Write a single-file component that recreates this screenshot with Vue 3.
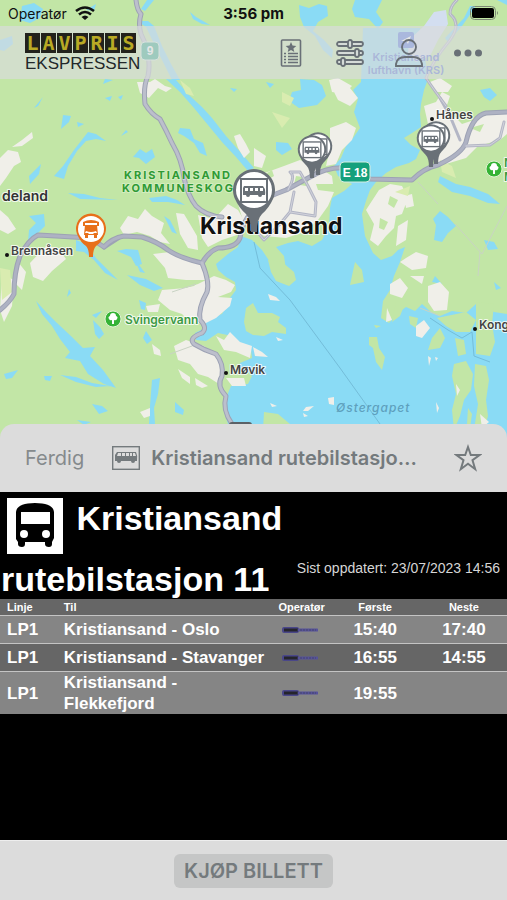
<template>
  <div class="screen">
    <section class="map-area">
      <svg class="map" viewBox="0 0 507 440" preserveAspectRatio="xMidYMin slice" role="img" aria-label="Kart">
        <rect class="land" width="507" height="440" />

        <!-- fjord -->
        <path class="water" d="M363 28 L420 28 L424 50 L428 79 L424 90 L421 104 L420 114 L421 127 L412 133 L404 138 L411 145 L420 150 L416 159 L409 163 L396 167 L386 173 L376 182 L370 190 L366 201 L362 214 L365 236 L373 253 L381 260 L392 256 L398 250 L405 247 L400 262 L394 276 L390 290 L383 301 L381 318 L389 323 L398 313 L406 307 L415 311 L422 304 L431 312 L440 316 L452 311 L466 313 L476 304 L486 307 L494 312 L507 314 L507 440 L232 440 L228 424 L224 412 L226 398 L231 386 L248 384 L252 376 L247 371 L238 372 L240 363 L252 358 L251 350 L240 345 L232 336 L218 333 L206 341 L196 340 L195 333 L205 328 L206 318 L222 314 L230 298 L236 290 L235 282 L226 277 L218 270 L216 264 L228 254 L238 247 L241 236 L252 240 L262 250 L270 262 L286 270 L284 256 L276 247 L288 243 L298 241 L312 246 L322 240 L329 226 L330 208 L332 198 L344 191 L352 184 L338 176 L334 166 L341 158 L346 146 L353 138 L360 128 L354 112 L358 99 L353 90 L361 82 Z" />
        <path class="water" d="M299 5 L309 8 L319 4 L327 6 L328 16 L318 22 L313 31 L324 40 L333 50 L332 58 L323 50 L315 36 L304 27 L300 17 Z M355 0 L382 0 L376 12 L383 22 L378 29 L369 19 L355 17 L352 9 Z M300 79 L314 80 L322 85 L326 96 L317 105 L299 108 L289 101 L292 92 L301 90 Z" />
        <path class="water" d="M166 79 L176 80 L190 96 L202 107 L212 118 L226 136 L242 154 L254 168 L248 171 L236 157 L222 142 L208 125 L194 108 L180 92 Z M137 21 L148 21 L154 26 L162 46 L171 64 L180 80 L172 80 L160 56 L146 27 Z M147 0 L154 0 L145 11 L141 9 Z" />

        <!-- inland lakes -->
        <path class="water" d="M22 6 L34 3 L43 9 L40 18 L30 23 L20 20 Z M0 40 L12 36 L13 44 L4 51 L0 50 Z M190 12 L196 17 L210 25 L202 24 L193 19 Z M86 10 L96 4 L94 11 Z M105 79 L113 80 L103 84 Z M105 98 L112 96 L110 101 Z M43 97 L38 106 L34 108 Z M118 97 L123 95 L121 100 Z M230 88 L237 89 L234 92 Z" />
        <path class="water" d="M63 115 L71 116 L69 122 L61 129 Z M77 122 L84 124 L78 127 Z M88 132 L96 134 L106 141 L96 139 L86 141 L77 151 L68 166 L64 179 L54 176 L63 166 L74 150 Z M41 164 L39 174 L30 184 L29 176 Z M133 157 L140 149 L146 153 L152 149 L155 157 L146 164 L139 158 Z M126 130 L121 136 L128 132 Z" />
        <path class="water" d="M180 128 L190 129 L194 139 L203 143 L207 156 L200 153 L194 143 L184 136 L178 133 Z M68 193 L84 194 L100 198 L118 200 L80 199 Z M149 198 L166 196 L177 200 L185 205 L168 202 L152 202 Z M29 216 L44 214 L45 226 L37 234 L28 242 L29 230 L36 223 Z M164 216 L170 220 L177 234 L172 232 Z M126 249 L138 250 L142 264 L136 266 L131 257 L117 251 Z" />
        <path class="water" d="M76 240 L86 244 L96 258 L108 270 L118 280 L105 273 L94 260 L84 252 L76 251 Z M127 275 L146 279 L163 288 L154 291 L140 285 Z M134 258 L145 273 L140 272 Z M36 301 L46 312 L57 323 L72 337 L83 348 L95 347 L90 356 L103 370 L116 388 L104 384 L88 374 L80 361 L65 358 L70 352 L60 339 L52 326 L42 314 Z M60 375 L76 377 L92 383 L110 386 L96 387 L76 382 Z" />
        <path class="water" d="M4 374 L18 370 L12 378 L6 379 Z M44 376 L52 376 L50 381 L45 380 Z M92 404 L102 406 L108 411 L99 414 Z M93 320 L100 327 L104 334 L99 339 L95 334 Z M92 315 L102 311 L96 318 Z M139 300 L146 303 L145 310 L141 309 Z M146 331 L152 340 L147 344 L143 338 Z M152 380 L160 378 L158 394 L154 408 L155 424 L149 424 L150 406 Z M175 402 L184 410 L183 415 L175 412 Z M69 289 L67 297 L71 293 Z M77 420 L91 422 L84 425 Z" />
        <path class="water" d="M276 142 L288 143 L292 149 L282 155 L276 150 Z M266 82 L274 84 L270 88 Z M480 90 L490 88 L497 95 L490 101 L484 97 Z M440 176 L456 184 L470 187 L488 194 L500 204 L488 203 L470 196 L452 192 L438 182 Z M440 211 L448 217 L456 226 L448 233 L442 242 L434 240 L436 225 L433 219 Z M484 240 L494 242 L498 249 L488 250 Z M435 276 L442 284 L432 282 Z M494 282 L501 288 L496 290 Z M445 38 L464 18 L470 6 L476 6 L462 26 L448 42 Z M497 0 L507 0 L507 5 Z" />

        <!-- islands -->
        <path class="land" d="M268 260 L282 262 L294 272 L296 280 L289 286 L276 281 L271 272 Z M244 322 L246 308 L253 303 L258 313 L272 313 L280 317 L278 322 L286 328 L286 334 L272 332 L264 336 L253 335 L246 331 Z M355 262 L362 270 L364 282 L350 285 Z M369 337 L377 337 L379 348 L385 357 L382 370 L376 362 L373 348 L369 345 Z M264 412 L278 414 L290 424 L292 430 L263 430 Z M409 316 L418 318 L416 328 L410 324 Z M440 328 L445 338 L440 348 L428 350 L432 338 Z M437 318 L466 312 L476 320 L470 332 L456 332 L446 326 Z M476 302 L494 304 L492 324 L495 342 L490 356 L476 354 Z M455 338 L464 340 L466 354 L458 356 Z M454 364 L466 361 L473 374 L471 390 L464 400 L460 416 L454 430 L452 410 L456 394 L452 376 Z M475 364 L486 366 L489 380 L486 400 L488 416 L484 430 L474 430 L478 404 L474 386 Z M468 408 L472 414 L470 428 L467 424 Z M392 322 L400 316 L404 306 L396 302 Z M374 325 L381 326 L376 328 Z" />

        <!-- built-up ground -->
        <path class="urban" d="M22 140 L32 132 L33 138 L22 146 L12 147 Z M0 158 L8 150 L18 152 L21 162 L14 166 L6 178 L0 186 Z M0 210 L8 217 L16 229 L8 234 L0 230 Z M30 263 L46 246 L58 248 L66 259 L52 271 L43 281 L33 277 Z M2 274 L14 280 L12 306 L4 322 L0 310 Z M18 262 L26 272 L22 290 L16 284 Z" />
        <path class="urban" d="M120 228 L128 216 L138 219 L145 209 L152 216 L164 223 L161 233 L170 244 L160 242 L150 236 L137 232 L124 235 Z M176 213 L184 214 L190 224 L197 236 L198 250 L188 248 L180 234 Z M198 215 L214 219 L228 204 L238 210 L246 224 L240 234 L222 240 L208 247 L202 238 Z M153 254 L170 252 L181 259 L196 262 L204 264 L205 280 L186 280 L168 278 L165 268 Z M162 290 L186 288 L198 284 L214 276 L226 280 L235 285 L231 292 L218 297 L232 298 L230 306 L216 318 L204 324 L190 322 L182 314 L170 310 L158 300 Z M146 306 L160 304 L158 312 L148 312 Z" />
        <path class="urban" d="M174 346 L186 340 L204 346 L218 358 L222 372 L219 384 L208 377 L198 374 L190 364 L178 360 Z M152 344 L160 350 L161 356 L154 354 Z M178 369 L190 377 L190 384 L182 378 Z M195 378 L208 386 L202 388 L196 385 Z M216 336 L224 340 L230 332 L240 342 L252 346 L250 358 L236 352 L224 350 Z M226 378 L244 378 L246 386 L232 386 Z M140 412 L150 408 L150 416 L144 418 Z" />
        <path class="urban" d="M150 82 L155 79 L165 86 L172 88 L166 92 L158 88 L149 98 L140 93 L137 82 Z M234 136 L240 134 L246 144 L250 152 L244 158 L238 148 Z M330 84 L350 88 L358 98 L350 106 L338 100 Z M330 128 L346 122 L356 128 L352 140 L342 150 L336 164 L326 166 L330 148 Z M248 182 L262 174 L284 166 L300 160 L320 168 L332 176 L334 192 L328 206 L318 220 L304 232 L286 238 L264 236 L244 224 L238 204 Z M254 148 L266 156 L262 168 L254 166 Z M329 80 L338 78 L352 86 L344 94 L332 92 Z" />
        <path class="urban" d="M430 82 L440 78 L452 86 L448 92 L436 92 Z M424 106 L436 102 L442 92 L450 96 L446 108 L462 124 L474 120 L494 112 L507 114 L507 134 L500 140 L478 146 L466 158 L446 164 L432 160 L424 144 L428 124 Z M379 190 L390 184 L402 186 L408 198 L402 214 L396 216 L394 228 L386 236 L378 246 L370 240 L374 224 L366 210 Z M404 196 L412 194 L414 206 L406 208 Z M398 226 L408 220 L406 240 L396 246 Z M406 258 L416 252 L428 256 L426 268 L412 270 L400 262 Z M390 284 L400 278 L408 288 L402 298 L390 294 Z M428 286 L440 282 L449 292 L447 310 L434 311 L428 302 Z M416 326 L424 320 L430 328 L422 338 L416 336 Z M387 308 L392 320 L386 322 Z M410 276 L424 276 L422 284 Z" />
        <path class="urban" d="M268 294 L276 297 L280 301 L270 300 Z M276 337 L283 340 L278 341 Z M253 347 L262 352 L268 357 L255 356 Z M328 398 L334 397 L334 405 L329 404 Z M270 403 L277 406 L272 407 Z M306 407 L314 406 L308 411 L303 411 Z M428 356 L431 358 L429 366 Z M435 357 L438 358 L436 361 Z M436 402 L439 408 L437 413 Z M456 384 L460 390 L457 396 Z M303 413 L308 416 L304 417 Z M480 414 L489 422 L482 428 Z" />
        <path class="land" d="M390 196 L398 200 L394 208 L388 204 Z M296 176 L310 178 L306 186 L294 184 Z M262 176 L272 170 L274 176 L264 182 Z M184 284 L198 282 L194 286 L184 288 Z M380 218 L388 222 L384 230 L379 228 Z M470 128 L484 124 L480 132 Z M316 184 L352 184 L334 192 L318 190 Z" />
        <path class="field" d="M0 268 L10 270 L12 292 L2 300 Z M180 80 L190 88 L194 96 L186 94 Z M282 92 L294 98 L290 106 L282 102 Z M440 160 L452 166 L456 178 L442 172 Z M272 112 L290 118 L282 128 Z M395 192 L410 186 L408 196 Z" />

        <path class="airport" d="M409 40 L424 26 L434 12 L446 10 L448 24 L438 40 L430 56 L416 62 L408 54 Z" />
        <path class="ferry" d="M254 242 L260 268 L290 300 L340 368 L380 424 M430 318 L448 330 L462 338 L472 332 L474 356 L490 362" />
        <path class="minor" d="M170 354 L192 346 M418 182 L438 204 M455 224 L482 254 L507 206 M480 252 L478 276 M420 308 L440 316 M172 292 L196 284" />

        <!-- roads -->
        <g class="road-case">
          <path d="M136 0 Q137 10 141 14 Q138 24 141 34 Q152 56 148 76 Q143 86 145 104 Q151 114 160 119 Q166 130 172 143 Q182 160 184 178 Q188 196 196 206 Q206 216 222 217" />
          <path d="M0 310 Q10 302 14 294 Q14 272 20 256 Q28 240 38 235 L56 236 L90 238 L104 247 Q112 238 124 236 L142 237 Q158 242 168 250 Q180 258 202 263 Q208 252 218 248 Q236 248 240 238 Q242 222 252 212" />
          <path d="M104 247 L118 238" />
          <path d="M202 263 Q210 282 207 292 Q198 308 200 320 Q208 328 202 333 Q188 338 194 344 Q204 350 216 354 Q224 364 222 376 Q216 386 226 396 Q222 410 232 424" />
          <path d="M252 206 Q264 198 286 190 L310 177 Q328 166 348 168 L370 179 L412 180 Q424 168 438 165 Q462 154 466 142 Q472 116 486 113 L507 112" />
          <path class="thin" d="M288 190 Q296 176 290 172 L300 172 L308 186 L316 202 L315 216 L290 212 L294 192 M290 212 L280 224 L264 240 L254 228 M466 146 L490 145 L500 138 L504 122 M440 98 L450 116 L460 140" />
          <path class="thin" d="M457 0 Q450 6 450 14 Q462 24 450 40 Q432 62 426 78 Q434 90 446 106" />
        </g>
        <g class="road">
          <path d="M136 0 Q137 10 141 14 Q138 24 141 34 Q152 56 148 76 Q143 86 145 104 Q151 114 160 119 Q166 130 172 143 Q182 160 184 178 Q188 196 196 206 Q206 216 222 217" />
          <path class="main" d="M0 310 Q10 302 14 294 Q14 272 20 256 Q28 240 38 235 L56 236 L90 238 L104 247 Q112 238 124 236 L142 237 Q158 242 168 250 Q180 258 202 263 Q208 252 218 248 Q236 248 240 238 Q242 222 252 212" />
          <path d="M202 263 Q210 282 207 292 Q198 308 200 320 Q208 328 202 333 Q188 338 194 344 Q204 350 216 354 Q224 364 222 376 Q216 386 226 396 Q222 410 232 424" />
          <path class="main" d="M252 206 Q264 198 286 190 L310 177 Q328 166 348 168 L370 179 L412 180 Q424 168 438 165 Q462 154 466 142 Q472 116 486 113 L507 112" />
          <path class="thin" d="M288 190 Q296 176 290 172 L300 172 L308 186 L316 202 L315 216 L290 212 L294 192 M290 212 L280 224 L264 240 L254 228 M466 146 L490 145 L500 138 L504 122" />
          <path class="thin" d="M457 0 Q450 6 450 14 Q462 24 450 40 Q432 62 426 78 Q434 90 446 106" />
        </g>

        <!-- road signs -->
        <g class="sign">
          <rect x="141" y="42" width="18" height="18" rx="4" />
          <text x="150" y="55" text-anchor="middle">9</text>
          <rect x="340" y="162" width="30" height="20" rx="4" />
          <text x="355" y="177" text-anchor="middle">E 18</text>
        </g>
        <rect x="229" y="422" width="23" height="9" rx="3" fill="#5b6166" />

        <!-- parks -->
        <g v-for="park in parks" :key="park.x" :transform="`translate(${park.x} ${park.y})`">
          <circle r="8" fill="#35b336" stroke="#e2f3d3" />
          <path d="M-4 0 A2 2 0 0 1 -3 -3 A3 3 0 0 1 3 -3 A2 2 0 0 1 4 0 Q3 2 1 1 L1 5 H-1 L-1 1 Q-3 2 -4 0 Z" fill="#fff" />
        </g>

        <!-- place names -->
        <g class="airport-name" text-anchor="middle">
          <rect x="398" y="32" width="16" height="16" rx="2" fill="#3f66e0" />
          <path d="M401 41 L411 36 L408 44 L406 41 Z" fill="#fff" />
          <text x="406" y="61">Kristiansand</text>
          <text x="406" y="74">lufthavn (KRS)</text>
        </g>
        <circle v-for="dot in dots" :key="dot.x" :cx="dot.x" :cy="dot.y" r="2" fill="#111" />
        <text v-for="place in places" :key="place.name" :class="['place', place.kind]" :x="place.x" :y="place.y">{{ place.name }}</text>

        <!-- stop pins -->
        <g v-for="(pin, i) in pins" :key="i" class="pin" :transform="`translate(${pin.x} ${pin.y}) scale(${pin.scale})`">
          <path class="pin-body" d="M-19 -33 A21 21 0 1 1 19 -33 Q15 -24 8 -18 Q3 -13 3 0 L-3 0 Q-3 -13 -8 -18 Q-15 -24 -19 -33 Z" />
          <circle cy="-42" r="18" fill="#fff" />
          <rect class="pin-frame" x="-13" y="-53" width="26" height="23" />
          <path class="pin-bus" d="M-10 -46 H9 Q12 -43 11 -37 H8 A2 2 0 0 1 4 -37 H-4 A2 2 0 0 1 -8 -37 H-11 V-44 Z" />
          <path d="M-9 -44 H-6 V-41 H-9 Z M-4 -44 H-1 V-41 H-4 Z M1 -44 H4 V-41 H1 Z M6 -44 H9 V-41 H6 Z" fill="#fff" />
        </g>
        <g transform="translate(91 257)">
          <path d="M-14 -23 A15 15 0 1 1 14 -23 Q10 -14 5 -11 Q2 -8 2 0 L-2 0 Q-2 -8 -5 -11 Q-10 -14 -14 -23 Z" fill="#e8701a" />
          <circle cy="-28" r="13" fill="#fff" />
          <path d="M-8 -35 Q0 -39 8 -35 V-31 H6 V-34 H-6 V-31 H-8 Z M-6 -32 H6 L7 -22 H6 V-19 H3 V-22 H-3 V-19 H-6 V-22 H-7 Z" fill="#e8701a" />
          <path d="M-5 -26 Q0 -24 5 -26 L6 -24 H3 L2 -23 H-2 L-3 -24 H-6 Z" fill="#fff" />
        </g>
      </svg>

      <div class="status-bar">
        <div class="carrier">
          <span>Operatør</span>
          <svg width="20" height="14" viewBox="0 0 20 14" aria-hidden="true">
            <path d="M1 5 Q10 -2 19 5 M4 8.500 Q10 3.500 16 8.500" fill="none" stroke="#111" stroke-width="2.600" />
            <path d="M6.500 11 Q10 8 13.500 11 L10 14 Z" fill="#111" />
          </svg>
        </div>
        <span class="clock">3:56 pm</span>
        <svg class="battery" width="29" height="14" viewBox="0 0 29 14" aria-hidden="true">
          <rect x="0.500" y="0.500" width="25" height="13" rx="4" fill="none" stroke="#7c8874" />
          <rect x="2" y="2" width="22" height="10" rx="2" fill="#000" />
          <path d="M27 5 Q29 7 27 9 Z" fill="#7c8874" />
        </svg>
      </div>

      <header class="top-bar">
        <div class="logo">
          <div class="logo-tiles">
            <span v-for="(letter, i) in 'LAVPRIS'" :key="i">{{ letter }}</span>
          </div>
          <div class="logo-name">EKSPRESSEN</div>
        </div>
        <nav class="actions">
          <button type="button" aria-label="Billetter">
            <svg viewBox="0 0 28 28" fill="none" stroke="currentColor">
              <rect x="4.500" y="1" width="19" height="26" rx="1" stroke-width="1.600" />
              <path d="M14 3 L15.500 6.600 L19.300 6.900 L16.400 9.400 L17.300 13 L14 11 L10.700 13 L11.600 9.400 L8.700 6.900 L12.500 6.600 Z" fill="currentColor" stroke="none" />
              <path d="M7 14.500 H9 M11 14.500 H21 M7 17.500 H9 M11 17.500 H21 M7 20.500 H9 M11 20.500 H21 M7 23.500 H9 M11 23.500 H21" stroke-width="1.400" />
            </svg>
          </button>
          <button type="button" aria-label="Filter">
            <svg viewBox="0 0 28 28" fill="#d5dbd8" stroke="currentColor" stroke-width="1.800">
              <rect x="1" y="3" width="26" height="4" rx="2" />
              <rect x="1" y="12" width="26" height="4" rx="2" />
              <rect x="1" y="21" width="26" height="4" rx="2" />
              <rect x="12" y="1" width="4" height="8" rx="2" />
              <rect x="19" y="10" width="4" height="8" rx="2" />
              <rect x="5" y="19" width="4" height="8" rx="2" />
            </svg>
          </button>
          <button type="button" aria-label="Min side">
            <svg viewBox="0 0 28 28" fill="none" stroke="currentColor" stroke-width="1.900">
              <circle cx="14" cy="8" r="7" />
              <path d="M1 27 V25 Q2 18 10 18 H18 Q26 18 27 25 V27 Z" />
            </svg>
          </button>
          <button type="button" aria-label="Mer">
            <svg viewBox="0 0 28 28" fill="currentColor">
              <circle cx="3.500" cy="14" r="3.500" />
              <circle cx="14" cy="14" r="3.500" />
              <circle cx="24.500" cy="14" r="3.500" />
            </svg>
          </button>
        </nav>
      </header>
    </section>

    <div class="sheet-bar">
      <button class="done" type="button">Ferdig</button>
      <svg class="stop-icon" width="28" height="24" viewBox="0 0 28 24" aria-hidden="true">
        <rect x="0.700" y="0.700" width="26.600" height="22.600" fill="none" stroke="#747a7d" stroke-width="1.400" />
        <path d="M5 6 H24 Q26 10 25 15 H23 A2 2 0 0 1 19 15 H9 A2 2 0 0 1 5 15 H3 V9 Z" fill="#747a7d" />
        <path d="M6 7 H9 V10 H5 Z M10 7 H13 V10 H10 Z M14 7 H17 V10 H14 Z M18 7 H20 V10 H18 Z M21 7 H23 L24 10 H21 Z" fill="#dcdcdc" />
      </svg>
      <div class="sheet-title">Kristiansand rutebilstasjon 11</div>
      <button class="favourite" type="button" aria-label="Favoritt">
        <svg width="28" height="28" viewBox="0 0 28 28" fill="none" stroke="currentColor" stroke-width="2">
          <path d="M14 3 L16.800 11 L25.500 11 L18.500 16.200 L21.200 25.200 L14 19.800 L6.800 25.200 L9.500 16.200 L2.500 11 L11.200 11 Z" />
        </svg>
      </button>
    </div>

    <main class="board">
      <div class="board-head">
        <h1>
          <svg width="56" height="56" viewBox="0 0 56 56" aria-hidden="true">
            <rect width="56" height="56" fill="#fff" />
            <path d="M9 14 Q10 5 28 5 Q46 5 47 14 V40 L45 44 V46 Q45 49 42 49 Q38 49 38 46 V44 H18 V46 Q18 49 15 49 Q11 49 11 46 V44 L9 41 Z" fill="#000" />
            <rect x="14" y="14" width="29" height="12" fill="#fff" />
            <circle cx="17" cy="36" r="4" fill="#fff" />
            <circle cx="39" cy="36" r="4" fill="#fff" />
          </svg>
          Kristiansand rutebilstasjon 11
        </h1>
        <p class="updated">Sist oppdatert: 23/07/2023 14:56</p>
      </div>

      <table class="departures">
        <thead>
          <tr>
            <th class="line">Linje</th>
            <th class="to">Til</th>
            <th class="operator">Operatør</th>
            <th class="first">Første</th>
            <th class="next">Neste</th>
          </tr>
        </thead>
        <tbody>
          <tr v-for="row in departures" :key="row.to">
            <td class="line">{{ row.line }}</td>
            <td class="to">{{ row.to }}</td>
            <td class="operator">
              <svg width="36" height="6" viewBox="0 0 36 6" aria-label="Lavprisekspressen">
                <rect width="17" height="6" rx="2" fill="#4a4789" />
                <path d="M2 3 H16" stroke="#25252c" stroke-width="3" />
                <path d="M17 3 H35" stroke="#56529a" stroke-width="3" stroke-linecap="round" />
                <path d="M18 3 H34" stroke="#45446a" stroke-dasharray="2 1" />
              </svg>
            </td>
            <td class="first">{{ row.first }}</td>
            <td class="next">{{ row.next }}</td>
          </tr>
        </tbody>
      </table>
    </main>

    <footer class="buy-bar">
      <button type="button">KJØP BILLETT</button>
    </footer>
  </div>
</template>

<script setup>
const departures = [
  { line: 'LP1', to: 'Kristiansand - Oslo', first: '15:40', next: '17:40' },
  { line: 'LP1', to: 'Kristiansand - Stavanger', first: '16:55', next: '14:55' },
  { line: 'LP1', to: 'Kristiansand - Flekkefjord', first: '19:55', next: '' }
]

const places = [
  { name: 'KRISTIANSAND', x: 124, y: 179, kind: 'park-area' },
  { name: 'KOMMUNESKOG', x: 122, y: 192, kind: 'park-area' },
  { name: 'deland', x: 2, y: 201, kind: 'town' },
  { name: 'Brennåsen', x: 11, y: 255, kind: 'village' },
  { name: 'Svingervann', x: 125, y: 324, kind: 'park' },
  { name: 'Møvik', x: 230, y: 374, kind: 'village' },
  { name: 'Hånes', x: 436, y: 119, kind: 'village' },
  { name: 'Kong', x: 479, y: 329, kind: 'village' },
  { name: 'Østergapet', x: 336, y: 412, kind: 'sea' },
  { name: 'N', x: 504, y: 167, kind: 'park' },
  { name: 'M', x: 504, y: 181, kind: 'park' },
  { name: 'Kristiansand', x: 200, y: 234, kind: 'city' }
]

const dots = [
  { x: 7, y: 255 },
  { x: 226, y: 373 },
  { x: 432, y: 119 },
  { x: 475, y: 329 }
]

const parks = [
  { x: 113, y: 319 },
  { x: 494, y: 169 }
]

// drawn back to front
const pins = [
  { x: 318, y: 175, scale: 0.68 },
  { x: 312, y: 178, scale: 0.68 },
  { x: 436, y: 164, scale: 0.68 },
  { x: 431, y: 167, scale: 0.68 },
  { x: 254, y: 232, scale: 1 }
]
</script>

<style>
body {
  margin: 0;
  background: #000;
}
</style>

<style scoped>
.screen {
  display: flex;
  flex-direction: column;
  min-height: 100vh;
  font-family: Inter, "Liberation Sans", sans-serif;
  color: #111;
}

button {
  padding: 0;
  border: 0;
  background: none;
  color: inherit;
  font: inherit;
  cursor: pointer;
}

.map-area {
  position: relative;
  flex: none;
  height: 440px;
  overflow: hidden;
}

.map {
  position: absolute;
  inset: 0;
  width: 100%;
  height: 100%;
}

.land { fill: #c2e6a6; }
.water { fill: #8adbf5; }
.urban { fill: #f0efe9; }
.field { fill: #d9ecb0; }
.airport { fill: #d3def0; }

.ferry {
  fill: none;
  stroke: #74bdd9;
}

.minor {
  fill: none;
  stroke: #c9d3c4;
}

.road-case,
.road {
  fill: none;
  stroke-linejoin: round;
  stroke-linecap: round;
}

.road-case {
  stroke: #9da2b4;
  stroke-width: 5;
}

.road {
  stroke: #bcbfcc;
  stroke-width: 3;
}

.road .main { stroke: #aeb2c3; }
.road-case .thin { stroke-width: 3; stroke: #b3b6c5; }
.road .thin { stroke-width: 1; stroke: #d2d3dc; }

.sign rect {
  fill: #14a07b;
  stroke: #d5eee2;
  stroke-width: 1;
}

.sign text {
  fill: #fff;
  font-family: "Liberation Sans", sans-serif;
  font-size: 12px;
  font-weight: 700;
}

.airport-name {
  fill: #3f5fd0;
  font-size: 11px;
  font-weight: 600;
}

.place {
  paint-order: stroke;
  stroke: #fff;
  stroke-width: 2px;
  stroke-linejoin: round;
  stroke-opacity: 0.8;
}

.city {
  fill: #111;
  font-size: 23px;
  font-weight: 700;
}

.town {
  fill: #333;
  font-size: 14px;
  font-weight: 600;
}

.village {
  fill: #444;
  font-size: 12px;
  font-weight: 600;
}

.park {
  fill: #3c9a44;
  font-size: 12px;
  font-weight: 600;
}

.park-area {
  fill: #2f9a35;
  stroke-opacity: 0.3;
  font-size: 11px;
  font-weight: 700;
  letter-spacing: 2px;
}

.sea {
  fill: #5ea0bd;
  stroke: none;
  font-size: 12px;
  font-style: italic;
  font-weight: 500;
  letter-spacing: 1px;
}

.pin-body {
  fill: #697077;
}

.pin-frame {
  fill: none;
  stroke: #697077;
  stroke-width: 2;
}

.pin-bus {
  fill: #697077;
}

.status-bar {
  position: relative;
  display: grid;
  grid-template-columns: 1fr auto 1fr;
  align-items: center;
  height: 26px;
  padding: 0 8px;
  font-size: 14px;
}

.carrier {
  display: flex;
  align-items: center;
  gap: 8px;
}

.clock {
  font-size: 15px;
  font-weight: 700;
}

.battery {
  justify-self: end;
}

.top-bar {
  position: relative;
  display: flex;
  align-items: center;
  justify-content: space-between;
  height: 53px;
  padding: 0 25px;
  background: rgba(217, 220, 220, 0.7);
}

.logo-tiles {
  display: flex;
  gap: 1px;
}

.logo-tiles span {
  width: 15px;
  height: 20px;
  background: #22221c;
  color: #b9aa25;
  font: 700 20px/20px "DejaVu Sans Mono", "Liberation Mono", monospace;
  text-align: center;
}

.logo-name {
  margin-top: 2px;
  color: #22282a;
  font: 17px/18px "Liberation Sans", Arial, sans-serif;
}

.actions {
  display: flex;
  gap: 31px;
  color: #697077;
}

.actions button,
.actions svg {
  display: block;
  width: 28px;
  height: 28px;
}

.sheet-bar {
  position: relative;
  display: flex;
  align-items: center;
  height: 68px;
  margin-top: -16px;
  padding: 0 25px;
  border-radius: 14px 14px 0 0;
  background: #dcdcdc;
  color: #747a7d;
  font-size: 20px;
}

.done {
  color: #858a8c;
}

.stop-icon {
  flex: none;
  margin: 0 11px 0 28px;
}

.sheet-title {
  flex: 1;
  min-width: 0;
  margin-right: 36px;
  overflow: hidden;
  font-weight: 600;
  text-overflow: ellipsis;
  white-space: nowrap;
}

.favourite svg {
  display: block;
}

.board {
  flex: 1;
  background: #000;
  color: #fff;
  font-family: "Liberation Sans", Arial, sans-serif;
}

.board-head {
  display: flex;
  align-items: flex-end;
  justify-content: space-between;
}

h1 {
  flex: 1;
  margin: 0;
  padding-left: 1px;
  font-size: 34px;
  line-height: 40px;
}

h1 svg {
  margin: 6px 4px 5px 6px;
  vertical-align: -29px;
}

.updated {
  margin: 0 7px 21px 0;
  color: #d6d6d6;
  font-size: 14px;
  line-height: 20px;
}

.departures {
  width: 100%;
  border-collapse: collapse;
  table-layout: fixed;
}

.departures th,
.departures td {
  box-sizing: border-box;
  padding: 0;
  text-align: center;
}

.departures th {
  height: 16px;
  background: #666;
  font-size: 11px;
  line-height: 16px;
}

.departures td {
  height: 28px;
  border-top: 1px solid #c4c4c4;
  background: #858585;
  font-size: 17px;
  font-weight: 700;
  line-height: 21px;
}

.departures tr:nth-child(even) td {
  background: #666;
}

.departures .line {
  width: 12%;
  padding-left: 7px;
  text-align: left;
}

.departures .to {
  width: 42%;
  padding: 0 4px 0 3px;
  text-align: left;
}

.departures .operator { width: 11%; }
.departures .first { width: 18%; }
.departures .next { width: 17%; }

.operator svg {
  display: block;
  margin: 0 8px;
}

.buy-bar {
  display: flex;
  align-items: center;
  justify-content: center;
  height: 60px;
  border-top: 1px solid #eee;
  box-sizing: border-box;
  background: #dcdcdc;
}

.buy-bar button {
  height: 34px;
  padding: 0 10px;
  border-radius: 6px;
  background: #c5c6c6;
  color: #747a7d;
  font-size: 20px;
  font-weight: 600;
}
</style>
